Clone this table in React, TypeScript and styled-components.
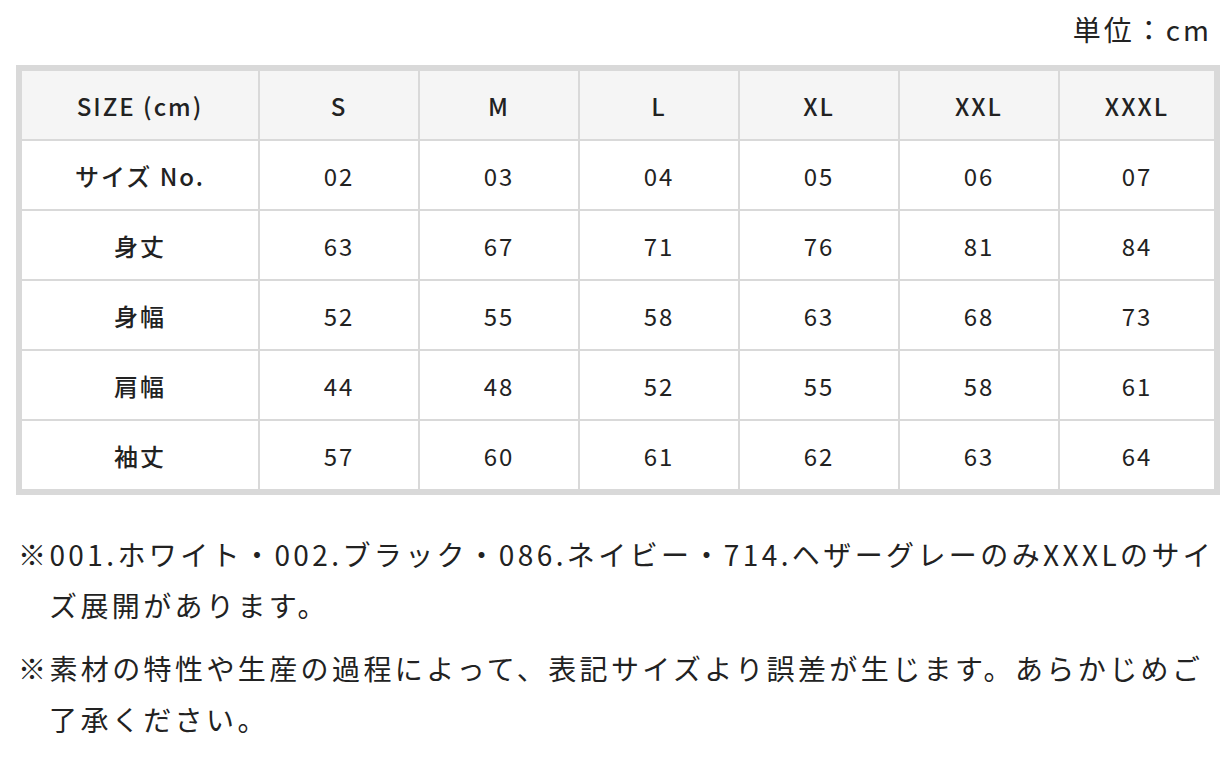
import styled, { createGlobalStyle } from "styled-components";

const GlobalStyle = createGlobalStyle`
  body {
    margin: 0;
    background: #ffffff;
    color: #222222;
    font-family: "Noto Sans CJK JP", "Noto Sans", sans-serif;
  }
`;

const Page = styled.div`
  width: 1232px;
  padding: 4px 12px 0 16px;
  box-sizing: border-box;
`;

const Unit = styled.div`
  text-align: right;
  font-size: 28px;
  line-height: 50px;
  letter-spacing: 3px;
  padding-right: 8px;
  margin-bottom: 11px;
`;

const Table = styled.div`
  display: grid;
  grid-template-columns: 236px repeat(5, 158px) 1fr;
  gap: 2px;
  background: #d9d9d9;
  border: 6px solid #d9d9d9;
`;

const Cell = styled.div<{ $head?: boolean }>`
  height: 68px;
  display: flex;
  align-items: center;
  justify-content: center;
  background: ${(p) => (p.$head ? "#f5f5f5" : "#ffffff")};
  font-size: 24px;
  letter-spacing: 2px;
  font-weight: ${(p) => (p.$head ? 500 : 400)};
`;

const Label = styled(Cell)`
  font-weight: 500;
`;

const Notes = styled.div`
  margin: 34px 0 0 2px;
`;

const Note = styled.p`
  margin: 0 0 12px;
  font-size: 28px;
  line-height: 51px;
  letter-spacing: 3.4px;
  padding-left: 31px;
  text-indent: -31px;
`;

const sizes = ["S", "M", "L", "XL", "XXL", "XXXL"];

const rows: { label: string; values: string[] }[] = [
  { label: "サイズ No.", values: ["02", "03", "04", "05", "06", "07"] },
  { label: "身丈", values: ["63", "67", "71", "76", "81", "84"] },
  { label: "身幅", values: ["52", "55", "58", "63", "68", "73"] },
  { label: "肩幅", values: ["44", "48", "52", "55", "58", "61"] },
  { label: "袖丈", values: ["57", "60", "61", "62", "63", "64"] },
];

const App = () => {
  return (
    <Page>
      <GlobalStyle />
      <Unit>単位：cm</Unit>
      <Table>
        <Label $head>SIZE (cm)</Label>
        {sizes.map((s) => (
          <Cell $head key={s}>
            {s}
          </Cell>
        ))}
        {rows.map((row) => [
          <Label key={row.label}>{row.label}</Label>,
          ...row.values.map((v, i) => <Cell key={row.label + i}>{v}</Cell>),
        ])}
      </Table>
      <Notes>
        <Note>
          ※001.ホワイト・002.ブラック・086.ネイビー・714.ヘザーグレーのみXXXLのサイズ展開があります。
        </Note>
        <Note>
          ※素材の特性や生産の過程によって、表記サイズより誤差が生じます。あらかじめご了承ください。
        </Note>
      </Notes>
    </Page>
  );
};

export default App;
